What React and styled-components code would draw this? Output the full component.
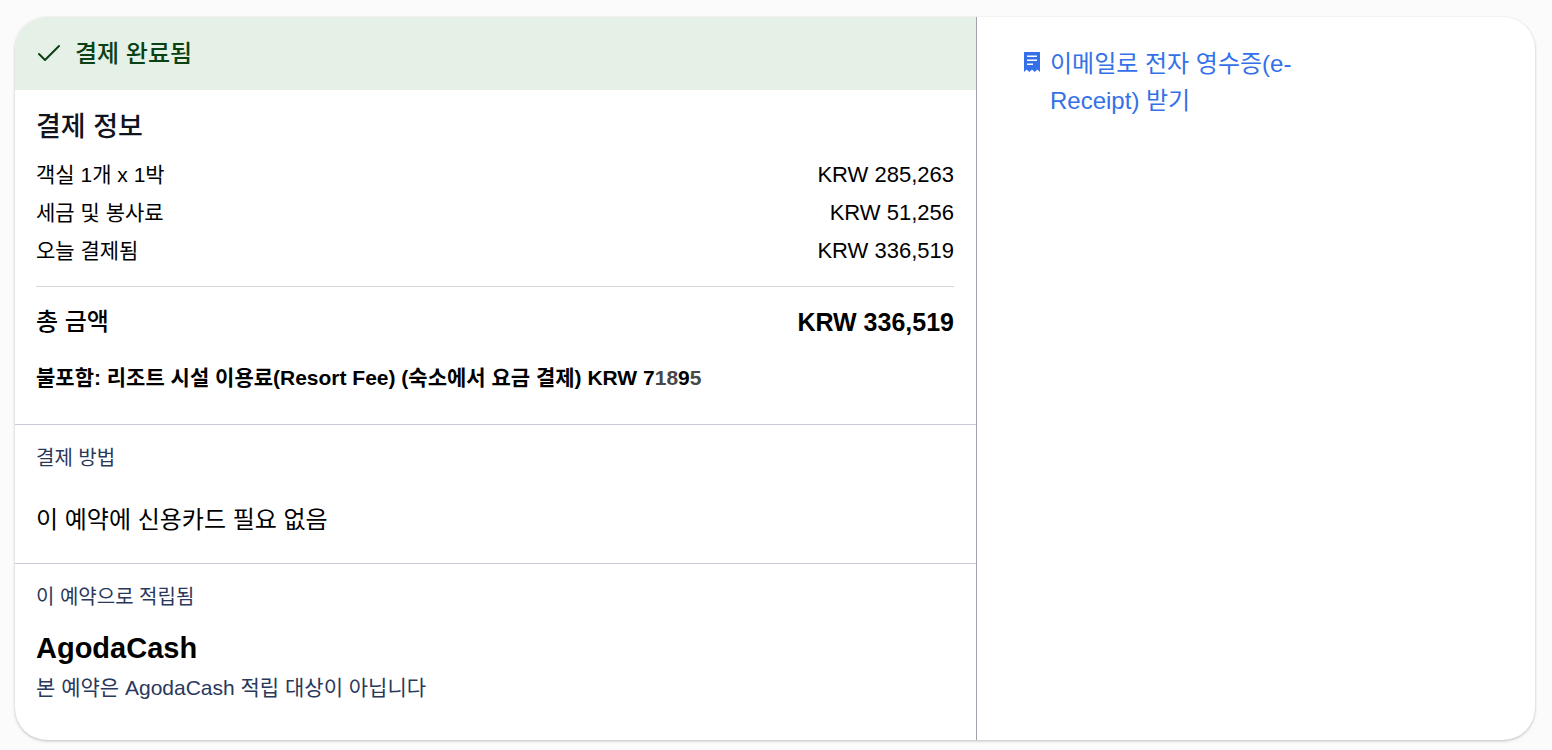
import React from "react";
import styled, { createGlobalStyle, css } from "styled-components";

const GlobalStyle = createGlobalStyle`
  * {
    box-sizing: border-box;
  }
  body {
    margin: 0;
    background-color: #fbfbfb;
    color: #000000;
    font-family: "Liberation Sans", "Noto Sans CJK KR", sans-serif;
  }
  h2, h3, p, dl, dd, dt {
    margin: 0;
  }
`;

const Page = styled.main`
  padding: 17px 17px 10px 15px;
`;

const Card = styled.article`
  display: grid;
  grid-template-columns: 962fr 558fr;
  background-color: #ffffff;
  border-radius: 32px;
  box-shadow: 0 1px 3px rgba(0, 0, 0, 0.25);
  overflow: hidden;
`;

const Details = styled.div`
  border-right: 1px solid #a3a3ad;
`;

const StatusBar = styled.div`
  display: flex;
  align-items: center;
  gap: 14px;
  height: 73px;
  padding: 0 22px 4px;
  background-color: #e5f0e6;
  color: #0b4213;
  font-size: 24px;
  font-weight: 500;
  svg {
    margin-top: 2px;
  }
`;

const Section = styled.section`
  padding: 17px 22px 16px 21px;
  & + & {
    border-top: 1px solid #c8cad8;
  }
`;

const Title = styled.h2`
  color: #0f1420;
  font-size: 27px;
  font-weight: 500;
  line-height: 40px;
  margin-bottom: 9px;
`;

const PriceList = styled.dl`
  padding-bottom: 16px;
  border-bottom: 1px solid #d5d7dd;
`;

const PriceRow = styled.div`
  display: flex;
  justify-content: space-between;
  font-size: 21px;
  line-height: 38px;
  dd {
    font-size: 22px;
  }
  ${(props) =>
    props.$total &&
    css`
      padding: 16px 0;
      font-size: 24px;
      font-weight: 500;
      dd {
        font-size: 25px;
        font-weight: 700;
      }
    `}
`;

const Excluded = styled.p`
  font-size: 21px;
  font-weight: 700;
  line-height: 38px;
  padding: 2px 0 11px;
`;

const Faded = styled.span`
  color: #484848;
`;

const Label = styled.h3`
  color: #2a385b;
  font-size: 20px;
  font-weight: 400;
  line-height: 32px;
`;

const Method = styled.p`
  font-size: 24px;
  line-height: 40px;
  padding: 26px 0 7px;
`;

const Reward = styled.p`
  font-size: 29px;
  font-weight: 700;
  line-height: 40px;
  margin-top: 15px;
`;

const RewardNote = styled.p`
  color: #2a385b;
  font-size: 21px;
  line-height: 40px;
  padding-bottom: 16px;
`;

const Actions = styled.aside`
  padding: 28px 46px;
`;

const ReceiptLink = styled.a`
  display: flex;
  align-items: flex-start;
  gap: 9px;
  max-width: 280px;
  color: #3471e8;
  font-size: 24px;
  line-height: 37px;
  text-decoration: none;
  svg {
    flex: none;
    margin-top: 6px;
  }
`;

const CheckIcon = () => (
  <svg width="24" height="24" viewBox="0 0 24 24" fill="none" aria-hidden="true">
    <path
      d="M2 13L8 19L22 5"
      stroke="currentColor"
      strokeWidth="2"
      strokeLinecap="round"
      strokeLinejoin="round"
    />
  </svg>
);

const ReceiptIcon = () => (
  <svg width="18" height="22" viewBox="0 0 18 22" aria-hidden="true">
    <path
      fill="currentColor"
      fillRule="evenodd"
      d="M1 1H17V21L14.300 18.500L11.700 21L9 18.500L6.300 21L3.700 18.500L1 21ZM4 4.500V6H14V4.500ZM4 8.500V10H14V8.500ZM4 12.500V14H10V12.500Z"
    />
  </svg>
);

const prices = [
  { name: "객실 1개 x 1박", amount: "KRW 285,263" },
  { name: "세금 및 봉사료", amount: "KRW 51,256" },
  { name: "오늘 결제됨", amount: "KRW 336,519" },
];

function App() {
  return (
    <>
      <GlobalStyle />
      <Page>
        <Card>
          <Details>
            <StatusBar>
              <CheckIcon />
              결제 완료됨
            </StatusBar>
            <Section>
              <Title>결제 정보</Title>
              <PriceList>
                {prices.map((price) => (
                  <PriceRow key={price.name}>
                    <dt>{price.name}</dt>
                    <dd>{price.amount}</dd>
                  </PriceRow>
                ))}
              </PriceList>
              <dl>
                <PriceRow $total>
                  <dt>총 금액</dt>
                  <dd>KRW 336,519</dd>
                </PriceRow>
              </dl>
              <Excluded>
                불포함: 리조트 시설 이용료(Resort Fee) (숙소에서 요금 결제) KRW 7
                <Faded>18</Faded>9<Faded>5</Faded>
              </Excluded>
            </Section>
            <Section>
              <Label>결제 방법</Label>
              <Method>이 예약에 신용카드 필요 없음</Method>
            </Section>
            <Section>
              <Label>이 예약으로 적립됨</Label>
              <Reward>AgodaCash</Reward>
              <RewardNote>본 예약은 AgodaCash 적립 대상이 아닙니다</RewardNote>
            </Section>
          </Details>
          <Actions>
            <ReceiptLink href="#receipt">
              <ReceiptIcon />
              <span>이메일로 전자 영수증(e-Receipt) 받기</span>
            </ReceiptLink>
          </Actions>
        </Card>
      </Page>
    </>
  );
}

export default App;
